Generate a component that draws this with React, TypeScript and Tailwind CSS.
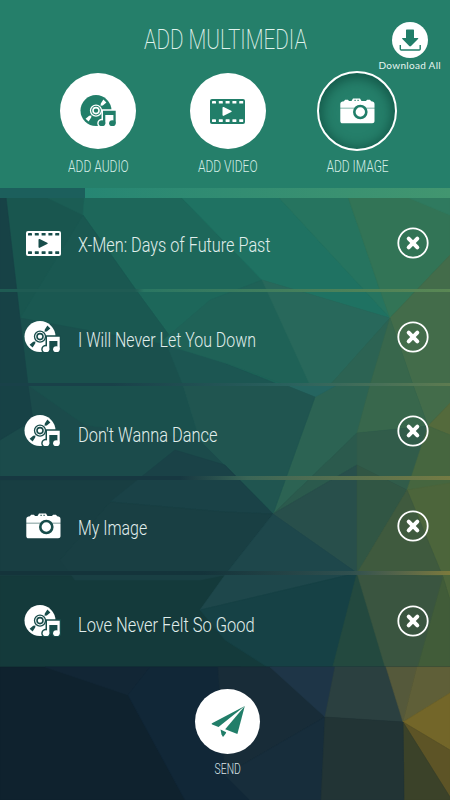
import React from "react";
import clsx from "clsx";

type MediaType = "audio" | "video" | "image";

type MediaItem = {
  title: string;
  type: MediaType;
  textClass: string;
};

const ITEMS: MediaItem[] = [
  { title: "X-Men: Days of Future Past", type: "video", textClass: "pt-[3px] scale-x-[0.813]" },
  { title: "I Will Never Let You Down", type: "audio", textClass: "pt-[5px] scale-x-[0.797]" },
  { title: "Don't Wanna Dance", type: "audio", textClass: "pt-[8px] scale-x-[0.818]" },
  { title: "My Image", type: "image", textClass: "pt-[5px] scale-x-[0.795]" },
  { title: "Love Never Felt So Good", type: "audio", textClass: "pt-[9px] scale-x-[0.823]" },
];

// [fill, points]
const FACETS: [string, string][] = [
  // base
  ["#19564f", "0,188 450,188 450,385 0,385"],
  ["#1b4b4b", "0,385 450,385 450,480 0,480"],
  ["#183e42", "0,480 450,480 450,576 0,576"],
  ["#143a3b", "0,576 450,576 450,667 0,667"],
  // upper left
  ["#1b5d54", "27,188 85,188 83,215"],
  ["#1d675a", "85,188 172,188 262,280 310,385 275,385 225,363 180,350 136,290 83,215"],
  ["#1a5851", "83,215 136,290 180,350 170,345 20,318"],
  ["#1a504d", "20,318 167,345 183,385 200,440 85,425 28,385"],
  ["#1c5652", "167,345 225,363 275,383 315,397 273,514 225,465 200,440 183,385"],
  ["#174246", "0,188 5,188 20,318 28,385 33,420 0,440"],
  // upper middle
  ["#1f7262", "172,188 270,188 390,318 262,280"],
  ["#1f6257", "262,280 310,385 285,385 225,363 160,343 210,300"],
  ["#26745f", "270,188 345,188 380,290 390,318"],
  ["#28685b", "262,280 390,318 330,385 310,385"],
  // upper right
  ["#327456", "345,188 450,188 450,255 390,318 380,290"],
  ["#2f7a5f", "385,188 450,188 450,215"],
  ["#436c4a", "450,255 450,403 428,426 413,385 390,318"],
  ["#2c6353", "390,318 330,385 337,385 315,397 273,514 357,433 370,385"],
  ["#38674c", "390,318 413,385 428,426 357,433 370,385"],
  ["#256560", "285,385 337,385 315,397"],
  ["#205550", "183,385 285,385 315,397 273,514 225,465 200,440"],
  // centre
  ["#2b5a4d", "273,514 357,433 357,465"],
  ["#284f4b", "273,514 357,465 357,573"],
  ["#315c4a", "357,433 428,426 407,490 357,465"],
  ["#315644", "357,465 407,490 365,560 357,573"],
  ["#546a3c", "428,426 450,403 450,435"],
  ["#46663f", "428,426 450,435 450,485 407,490"],
  ["#4c653b", "407,490 450,483 450,600 443,577"],
  ["#3f5a3e", "407,490 443,577 357,573 365,560"],
  ["#1a4247", "110,502 175,450 225,465 273,514 225,512"],
  ["#193f43", "110,502 225,512 273,514 225,575 200,580 75,580 60,560"],
  ["#1e474b", "273,514 357,573 200,610 225,575"],
  // lower rows
  ["#164145", "357,573 332,670 272,670 225,640 200,610"],
  ["#23493f", "357,573 386,670 332,670"],
  ["#3a5540", "357,573 443,577 417,670 386,670"],
  ["#415c39", "443,577 450,600 450,670 417,670"],
  // footer
  ["#0f222e", "0,667 450,667 450,800 0,800"],
  ["#122635", "45,667 150,667 128,695"],
  ["#112737", "150,667 240,667 325,717 321,800 185,800 128,695"],
  ["#182c38", "218,667 272,667 325,717 225,775"],
  ["#172d3b", "325,717 321,800 250,800 225,775"],
  ["#1e3547", "270,667 335,667 325,717"],
  ["#2b4040", "335,667 386,667 403,722 325,717"],
  ["#55593b", "386,667 417,667 403,722"],
  ["#5f5f38", "417,667 450,667 450,693 403,722"],
  ["#736629", "403,722 450,693 450,750"],
  ["#5d5426", "403,722 450,750 450,797"],
  ["#3b4229", "403,722 450,797 450,800 404,800"],
  ["#223435", "325,717 403,722 404,800 321,800"],
];

const DIVIDERS = [
  "bg-linear-to-r from-[#1f5b53] from-30% via-[#2a7662] via-32% to-[#5a8754] h-[3px]",
  "bg-linear-to-r from-[#194149] from-25% via-[#2a625e] via-65% to-[#5d7b50] h-[3px]",
  "bg-linear-to-r from-[#173841] from-40% via-[#3b6656] via-55% to-[#747b43] h-1",
  "bg-linear-to-r from-[#14343b] from-45% via-[#30504f] via-78% to-[#7c7a3c] h-1",
];

const Backdrop = () => (
  <svg className="absolute inset-0" width="450" height="800" viewBox="0 0 450 800">
    {FACETS.map(([fill, points], index) => (
      // the thin stroke closes the antialiasing seams between neighbours
      <polygon key={index} points={points} fill={fill} stroke={fill} strokeWidth="0.6" />
    ))}
  </svg>
);

const Note = () => (
  <>
    <path d="M23 15.8h12.700v12.400h-2.300v-8.200h-8.100v8.200H23z" />
    <ellipse cx="22" cy="28.200" rx="3.300" ry="2.900" />
    <ellipse cx="32.400" cy="28.200" rx="3.300" ry="2.900" />
  </>
);

const DiscIcon = ({ hole }: { hole: string }) => (
  <svg width="37" height="32" viewBox="0 0 37 32" fill="currentColor">
    <circle cx="16" cy="15.6" r="15.5" />
    <g stroke={hole} fill="none">
      <circle cx="16" cy="15.6" r="5.5" strokeWidth="1.300" />
      <circle cx="16" cy="15.6" r="3" strokeWidth="1.600" />
    </g>
    <path
      d="M20.500 10.800l.3-2.200 2.600-4 3 2.800-3.600 3zM11.500 20.400l-.3 2.200-2.600 4-3-2.800 3.600-3z"
      fill={hole}
    />
    <g fill={hole} stroke={hole} strokeWidth="3">
      <Note />
      <rect x="24" y="17" width="10" height="10" />
    </g>
    <Note />
  </svg>
);

const FilmIcon = ({ hole }: { hole: string }) => (
  <svg width="35" height="25" viewBox="0 0 35 25" fill="currentColor">
    <rect width="35" height="25" rx="2" />
    <g fill={hole}>
      {[2, 8.8, 15.6, 22.4, 29.2].map((x) => (
        <React.Fragment key={x}>
          <rect x={x} y="2" width="4" height="2.6" rx="0.4" />
          <rect x={x} y="20.3" width="4" height="2.6" rx="0.4" />
        </React.Fragment>
      ))}
      <path d="M12.5 8.8c0-.8.6-1 1.2-.7l7.5 3.7c.7.4.7.9 0 1.3l-7.5 3.7c-.6.3-1.2 0-1.2-.7z" />
    </g>
  </svg>
);

const CameraIcon = ({ hole }: { hole: string }) => (
  <svg width="35" height="26" viewBox="0 0 35 26" fill="currentColor">
    <path d="M4 3.2l1-1.4h3l1 1.2h2.5L13 .5h7L21.500 3H26l1-1.200h3l1.200 1.400c2 0 3.300 1 3.300 2.800v17c0 1.300-.9 2.300-2.300 2.300H2.500C1.200 25.300.3 24.400.3 23V6c0-1.800 1.500-2.800 3.700-2.800z" />
    <path d="M0 9.800h35v.8H0z" fill={hole} opacity="0.75" />
    <circle cx="20.300" cy="14" r="6" stroke={hole} strokeWidth="2.600" />
    <path d="M14.500 1.700h1.200v1.200h-1.200zM17.500 1.700h1.200v1.200h-1.200z" fill={hole} />
  </svg>
);

const PlaneIcon = () => (
  <svg width="34" height="31" viewBox="0 0 34 31" fill="#217e69">
    <path d="M33.800 0L1 17.300c-.5.500-.4 1 .2 1.200l6.300 2.500z" />
    <path d="M33.800 0l-7.400 28L14.200 23.200z" />
    <path d="M9.500 23.600l5.700 2.600-.6 1.500-2.600 3.200-1.500-2.500z" />
  </svg>
);

const DownloadIcon = () => (
  <svg width="36" height="36" viewBox="0 0 36 36" fill="#217e69">
    <circle cx="18" cy="18" r="18" fill="white" />
    <path d="M15 7.500h6c.7 0 1 .3 1 1V16h3.500c.8 0 1 .5.500 1l-7 7c-.6.600-1.200.600-1.800 0l-6.800-7c-.5-.5-.3-1 .5-1H14V8.500c0-.7.3-1 1-1z" />
    <path
      d="M8.300 23v4c0 .6.3 1 1 1h17.900c.7 0 1-.4 1-1v-4"
      fill="none"
      stroke="#217e69"
      strokeWidth="1.400"
    />
  </svg>
);

const MediaIcon = ({ type, hole }: { type: MediaType; hole: string }) => {
  if (type === "audio") return <DiscIcon hole={hole} />;
  if (type === "video") return <FilmIcon hole={hole} />;
  return <CameraIcon hole={hole} />;
};

const AddButton = ({
  type,
  label,
  active,
}: {
  type: MediaType;
  label: string;
  active?: boolean;
}) => (
  <button className="flex w-[129.5px] flex-col items-center">
    <span
      className={clsx(
        "flex h-20 w-20 items-center justify-center rounded-full",
        active
          ? "border-2 border-white text-white shadow-[inset_0_2px_12px_3px_rgba(0,50,40,0.5)]"
          : "border-2 border-transparent bg-white bg-clip-padding text-[#217e69]"
      )}
    >
      <MediaIcon type={type} hole={active ? "#217e69" : "white"} />
    </span>
    <span className="mt-1 scale-x-[0.75] whitespace-nowrap text-[16px] leading-6 font-light text-[#d5eee7]">
      {label}
    </span>
  </button>
);

const RemoveButton = () => (
  <button aria-label="Remove">
    <svg width="32" height="32" viewBox="0 0 32 32" fill="none" stroke="white">
      <circle cx="16" cy="16" r="14.700" strokeWidth="1.800" />
      <path d="M11.700 11.700l8.600 8.600M20.300 11.700l-8.600 8.600" strokeWidth="4" strokeLinecap="round" />
    </svg>
  </button>
);

const MediaRow = ({ item }: { item: MediaItem }) => (
  <li className="flex flex-1 items-center pr-[21px] pl-6 text-white">
    <span className={clsx("flex w-[38px]", item.type === "audio" ? "justify-start" : "justify-center")}>
      <MediaIcon type={item.type} hole="#184d4b" />
    </span>
    <span
      className={clsx(
        "ml-4 flex-1 origin-left whitespace-nowrap text-[20px] leading-6 font-light text-[#e0eeec]",
        item.textClass
      )}
    >
      {item.title}
    </span>
    <RemoveButton />
  </li>
);

export default function App() {
  return (
    <div className="relative h-[800px] w-[450px] overflow-hidden font-['Roboto','Liberation_Sans',sans-serif]">
      <Backdrop />
      <div className="relative flex h-full flex-col">
        <header className="relative flex h-[188px] flex-col items-center bg-[#257f6a]">
          <h1 className="mt-[22px] scale-x-[0.737] whitespace-nowrap text-[28px] leading-9 font-extralight text-[#e0f3ed]">
            ADD MULTIMEDIA
          </h1>
          <div className="mt-[13px] flex w-full pl-[33.5px]">
            <AddButton type="audio" label="ADD AUDIO" />
            <AddButton type="video" label="ADD VIDEO" />
            <AddButton type="image" label="ADD IMAGE" active />
          </div>
          <button className="absolute top-[22px] right-[9px] flex flex-col items-center">
            <DownloadIcon />
            <span className="font-['Lato'] text-[10px] leading-[14px] tracking-[0.3px] text-[#e6f5f0]">
              Download All
            </span>
          </button>
        </header>

        <div className="h-[10px] bg-linear-to-r from-[#1c5f5c] from-19% via-[#268673] via-19% to-[#429670]" />
        <ul className="flex h-[468px] flex-col">
          {ITEMS.map((item, index) => (
            <React.Fragment key={item.title}>
              {index > 0 && <li className={DIVIDERS[index - 1]} />}
              <MediaRow item={item} />
            </React.Fragment>
          ))}
        </ul>

        <footer className="flex flex-1 flex-col items-center pt-[23px] pl-[5px]">
          <button className="flex flex-col items-center">
            <span className="flex h-[65px] w-[65px] items-center justify-center rounded-full bg-white">
              <PlaneIcon />
            </span>
            <span className="mt-[5px] scale-x-[0.74] text-[14px] leading-5 font-light text-[#dbe6e8]">
              SEND
            </span>
          </button>
        </footer>
      </div>
    </div>
  );
}
